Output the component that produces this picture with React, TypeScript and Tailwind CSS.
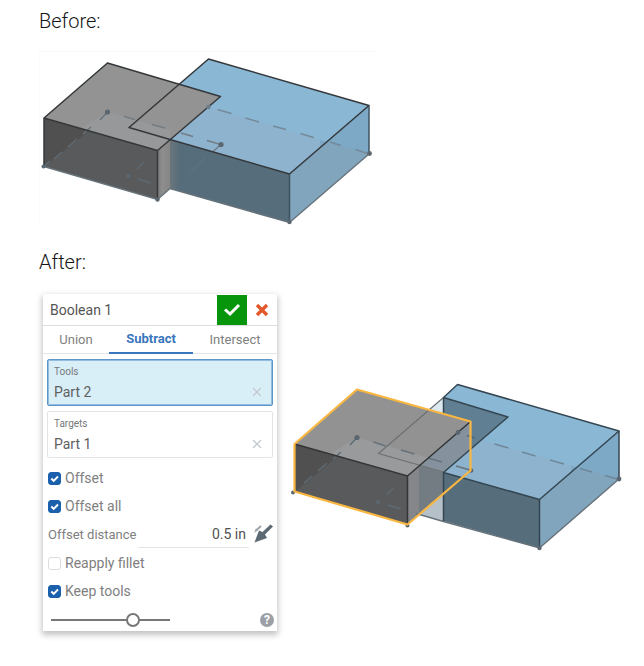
import { useState } from "react";

function BeforeModel() {
  return (
    <svg viewBox="39 51 336 176" className="block h-[176px] w-[336px]" role="img" aria-label="Two overlapping parts">
      <defs>
        <linearGradient id="sideShade" x1="0" x2="1">
          <stop offset="0" stopColor="#7c7c7c" />
          <stop offset="0.4" stopColor="#8e8e8e" />
          <stop offset="1" stopColor="#868686" />
        </linearGradient>
        <linearGradient id="frontShade" x1="0" x2="1">
          <stop offset="0" stopColor="#6c757b" />
          <stop offset="0.08" stopColor="#566d7b" />
          <stop offset="1" stopColor="#566d7b" />
        </linearGradient>
      </defs>
      <path d="M39 226V51.500H375" fill="none" stroke="#f9f9f9" />
      <g strokeLinejoin="round">
        <path d="M208.500 59L369 105.500L289.500 174L129 127.500Z" fill="#8ab7d4" />
        <path d="M208.500 107L369 154L289.500 174L170 139.500Z" fill="#8eb3cf" />
        <path d="M369 105.500V154L289.500 222.500V174Z" fill="#82a5be" />
        <path d="M369 105.500V154L320 140V147.500Z" fill="#7da8c6" />
        <path d="M170 139.500L289.500 174V222.500L170 188.500Z" fill="url(#frontShade)" />
        <path d="M44 118L107.500 63L220.500 96.500L157.500 150.500Z" fill="#939393" />
        <path d="M107.500 112L170 130V139.500L157.500 150.500L80 128.500Z" fill="#979899" />
        <path d="M44 118L157.500 150.500V199.500L44 166.500Z" fill="#595a5b" />
        <path d="M44 118L89 131L44 166.500Z" fill="#505050" />
        <path d="M157.500 150.500L170 139.500V188.500L157.500 199.500Z" fill="url(#sideShade)" />
      </g>
      <g fill="none" stroke="#66727a" strokeWidth="1.400">
        <path d="M44 166.500L157.500 199.500L170 188.500L289.500 222.500L369 154" />
        <path d="M124 116.500l11 3M152 124.500l13 3.500M181 133l12 3.500M207 140.500L221 144.500L213 151.500" stroke="#737c82" />
        <path d="M217.500 109.500l14 4M245.500 118l13.500 4M273 126l13 3.500M300.500 133.500l13 4M330 142l11 3.500M355.500 149.500L369 154" stroke="#74899a" />
        <path d="M107.500 112L100 120M91 127l-8 7" stroke="#66737b" />
        <path d="M77 139l-9 8M62 152l-8 7M50 161l-6 5M144 162l-7 7M138 179l13 4" stroke="#5e6b74" />
        <path d="M205 158l-15 14" stroke="#5f727f" />
      </g>
      <g fill="none" stroke="#34383b" strokeWidth="1.500" strokeLinejoin="round">
        <path d="M44 166.500V118L107.500 63L220.500 96.500L157.500 150.500L44 118M157.500 150.500V199.500" />
        <path d="M170 139.500L129 127.500L208.500 59L369 105.500L289.500 174L170 139.500" />
        <path d="M369 105.500V154M289.500 174V222.500" stroke="#3f5260" />
      </g>
      <g fill="#5b6770">
        <circle cx="107.500" cy="112" r="2.600" />
        <circle cx="128.500" cy="176" r="2.200" />
        <circle cx="221" cy="144.500" r="2.600" />
        <circle cx="208.500" cy="107" r="2.200" fill="#6d7d89" />
        <circle cx="43.500" cy="166.500" r="2" />
        <circle cx="157.500" cy="199.500" r="2.200" />
        <circle cx="289.500" cy="222" r="2.200" />
        <circle cx="369.500" cy="153.500" r="2.400" />
      </g>
    </svg>
  );
}

function AfterModel() {
  return (
    <svg viewBox="290 380 336 172" className="block h-[172px] w-[336px] shrink-0" role="img" aria-label="Part after subtraction with offset">
      <path d="M416 421L443.500 397.500V521.500L392 506.500Z" fill="#dce8ef" />
      <path d="M407.500 462L443.500 472.500V521.500L407.500 511Z" fill="#b6c0c8" />
      <path d="M443.500 397.500L457.500 384.500L619 431L539.500 499.500L443.500 472.500Z" fill="#8ab7d4" />
      <path d="M458 433L619 479L539.500 499.500L443.500 472.500Z" fill="#8eb3cf" />
      <path d="M443.500 397.500L508 417L443.500 472.500Z" fill="#617f92" />
      <path d="M443.500 472.500L539.500 499.500V548L443.500 521Z" fill="#566d7b" />
      <path d="M619 431V479L539.500 548V499.500Z" fill="#82a5be" />
      <path d="M619 431V479L571 466V472.500Z" fill="#7da8c6" />
      <path d="M294.500 444L357 389.500L470 422L407.500 476Z" fill="#929292" />
      <path d="M357 437.500L433 459L407.500 476L330 454Z" fill="#989a9b" />
      <path d="M294.500 444L407.500 476V524.500L294.500 492Z" fill="#595a5b" />
      <path d="M294.500 444L338 456L294.500 492Z" fill="#505050" />
      <path d="M407.500 476L470 422V449.500L443.500 472.500V494L407.500 524.500Z" fill="#747c83" />
      <path d="M407.500 476L419 466V514.500L407.500 524.500Z" fill="#84868a" />
      <path d="M419 466L470 422V449.500L443.500 472.500L420 466Z" fill="#85929d" />
      <g fill="none" stroke="#66727a" strokeWidth="1.400">
        <path d="M416 513.500L443.500 521.500L539.500 548L619 479" />
        <path d="M373.500 442l12 4M401 450l13.500 4M428 458l14 4M456 466l14 4" />
        <path d="M467 435.500l8 2.500" stroke="#506a7b" />
        <path d="M494.500 444l14 4M522 452l13.500 4M550 460l14 4M580 468.500l12 3.500M605 475.500l14 4" stroke="#6f8899" />
        <path d="M357 437.500L350 445M341 452l-8 7M327 463l-9 8M312 476l-8 7M394 488l-8 7M388 505l13 4" stroke="#5e6b74" />
      </g>
      <path d="M443.500 397.500L378.500 453.500L443.500 472" fill="none" stroke="#6c7071" strokeWidth="1.200" />
      <g fill="none" stroke="#344651" strokeWidth="1.500" strokeLinejoin="round">
        <path d="M443.500 397.500L457.500 384.500L619 431L539.500 499.500L443.500 472.500L508 417L443.500 397.500" />
        <path d="M443.500 397.500V413M443.500 472.500V521M619 431V479M539.500 499.500V548" />
      </g>
      <path d="M294.500 444L407.500 476L470 422M407.500 476V524" fill="none" stroke="#333536" strokeWidth="1.500" />
      <g fill="#5b6770">
        <circle cx="357" cy="437.500" r="2.600" />
        <circle cx="378" cy="502" r="2.200" />
        <circle cx="458" cy="432.500" r="2.400" />
        <circle cx="471" cy="470.500" r="2.300" />
        <circle cx="293" cy="492.500" r="2" />
        <circle cx="407.500" cy="525.500" r="2" />
        <circle cx="539.500" cy="548" r="2.200" />
        <circle cx="619" cy="479" r="2.400" />
      </g>
      <path d="M294.500 444L357 389.500L470.500 421.500V470.500L407.500 524.500L294.500 491.500Z" fill="none" stroke="#f9b742" strokeWidth="2.200" strokeLinejoin="round" />
    </svg>
  );
}

function CheckRow({ label, checked = false }: { label: string; checked?: boolean }) {
  const [on, setOn] = useState(checked);
  return (
    <label className="flex h-[28px] items-center gap-1 pl-[5px] text-[14px] text-[#808080]">
      <span className="relative block size-[13px]">
        <input
          type="checkbox"
          checked={on}
          onChange={(e) => setOn(e.target.checked)}
          className="block size-[13px] appearance-none rounded-[3px] border border-[#dddddd] bg-white checked:border-[#1b60ad] checked:bg-[#1b60ad]"
        />
        {on && (
          <svg viewBox="0 0 13 13" className="pointer-events-none absolute inset-0" aria-hidden="true">
            <path d="M3.300 6.500L5.700 8.900L10 4.500" fill="none" stroke="white" strokeWidth="2" />
          </svg>
        )}
      </span>
      {label}
    </label>
  );
}

function Selection({ label, value, active = false }: { label: string; value: string; active?: boolean }) {
  return (
    <section
      className={`mx-1 h-[47px] rounded-[2px] border px-[6px] pt-[5px] ${
        active ? "border-[#5f96ca] bg-[#d9eff8] ring-1 ring-inset ring-[#94bce0]" : "border-[#e4e4e4] bg-white"
      }`}
    >
      <h3 className="text-[10px] leading-[14px] text-[#77797b]">{label}</h3>
      <div className="flex items-center justify-between pr-1 text-[14px] leading-[26px] text-[#606060]">
        <span>{value}</span>
        <button type="button" aria-label={`Remove ${value}`}>
          <svg viewBox="0 0 10 10" className="block size-[10px]">
            <path d="M1 1L9 9M9 1L1 9" stroke="#c3cbd0" strokeWidth="1.300" />
          </svg>
        </button>
      </div>
    </section>
  );
}

function BooleanDialog() {
  const [distance, setDistance] = useState("0.5 in");
  return (
    <form className="w-[234px] shrink-0 bg-white shadow-[0_3px_6px_1px_rgba(0,0,0,0.24)]">
      <header className="flex h-8 items-center border-b border-[#dddddd] pl-[7px]">
        <h2 className="flex-1 pt-[2px] text-[14px] text-[#555555]">Boolean 1</h2>
        <button type="button" aria-label="Accept" className="flex h-[30px] w-[30px] items-center justify-center bg-[#06950b]">
          <svg viewBox="0 0 18 14" className="h-[14px] w-[18px]">
            <path d="M2 6.500L7 11L16 2" fill="none" stroke="white" strokeWidth="3" />
          </svg>
        </button>
        <button type="button" aria-label="Cancel" className="flex h-[30px] w-[30px] items-center justify-center">
          <svg viewBox="0 0 14 14" className="size-[14px]">
            <path d="M2 2L12 12M12 2L2 12" stroke="#e1592c" strokeWidth="3.400" />
          </svg>
        </button>
      </header>
      <nav className="mb-[5px] flex h-[28px] border-b border-[#e6e6e6] text-[13px] text-[#808080]">
        <button type="button" className="w-[66px]">Union</button>
        <button type="button" className="-mb-px w-[84px] border-b-2 border-[#3976bc] font-bold text-[#3976bc]">Subtract</button>
        <button type="button" className="flex-1">Intersect</button>
      </nav>
      <div className="flex flex-col gap-[5px]">
        <Selection label="Tools" value="Part 2" active />
        <Selection label="Targets" value="Part 1" />
      </div>
      <div className="pt-[6px]">
        <CheckRow label="Offset" checked />
        <CheckRow label="Offset all" checked />
        <div className="flex h-[29px] items-center pl-[5px] text-[13px] text-[#808080]">
          <label htmlFor="distance" className="w-[90px] whitespace-nowrap">Offset distance</label>
          <input
            id="distance"
            value={distance}
            onChange={(e) => setDistance(e.target.value)}
            className="h-[26px] w-[111px] border-b border-[#e4e4e4] pr-[3px] text-right text-[14px] text-[#505050] outline-none"
          />
          <button type="button" aria-label="Flip direction" className="ml-1 pb-1">
            <svg viewBox="0 0 22 22" className="block size-[22px]">
              <path d="M1.500 20.500L6 8.500L9.500 10L17.500 2.500L20 4.500L12 12.500L14 16Z" fill="#5c6972" />
              <path d="M1 11L3 6.500L5 8Z" fill="#98a2a9" />
              <path d="M3 8.500L8 4" stroke="#98a2a9" strokeWidth="1.800" />
            </svg>
          </button>
        </div>
        <CheckRow label="Reapply fillet" />
        <CheckRow label="Keep tools" checked />
      </div>
      <footer className="flex h-[26px] items-center justify-between pl-2 pr-[3px] pt-1">
        <input
          type="range"
          aria-label="Opacity"
          defaultValue={71}
          className="h-[14px] w-[119px] appearance-none bg-transparent [&::-webkit-slider-runnable-track]:h-[2px] [&::-webkit-slider-runnable-track]:bg-[#777777] [&::-webkit-slider-thumb]:-mt-[6px] [&::-webkit-slider-thumb]:size-[14px] [&::-webkit-slider-thumb]:appearance-none [&::-webkit-slider-thumb]:rounded-full [&::-webkit-slider-thumb]:border-2 [&::-webkit-slider-thumb]:border-[#777777] [&::-webkit-slider-thumb]:bg-white"
        />
        <button type="button" aria-label="Help" className="size-[14px] rounded-full bg-[#9aa0a5] text-center text-[12px] font-bold leading-[14px] text-white">?</button>
      </footer>
    </form>
  );
}

export default function App() {
  return (
    <main className="bg-white pl-[39px] font-['Roboto','Liberation_Sans',sans-serif]">
      <section>
        <h1 className="pt-[7px] text-[20px] font-light leading-[28px] text-[#151515]">Before:</h1>
        <div className="pt-4">
          <BeforeModel />
        </div>
      </section>
      <section className="pt-[21px]">
        <h1 className="text-[20px] font-light leading-[28px] text-[#151515]">After:</h1>
        <div className="flex items-start gap-[13px] pl-1 pt-[18px] pb-[35px]">
          <BooleanDialog />
          <div className="pt-[86px]">
            <AfterModel />
          </div>
        </div>
      </section>
    </main>
  );
}
